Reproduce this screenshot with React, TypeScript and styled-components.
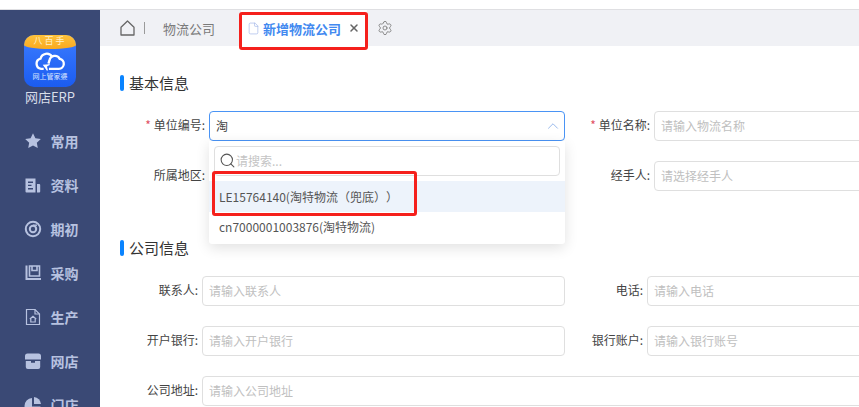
import styled, { createGlobalStyle } from 'styled-components';
import { ChevronUp, File, Search, Settings, X } from 'lucide-react';

const GlobalStyle = createGlobalStyle`
  html, body {
    margin: 0;
    padding: 0;
    height: 100%;
    overflow: hidden;
    background: #fff;
    font-family: "Noto Sans CJK SC", "Noto Sans", sans-serif;
    text-spacing-trim: space-all;
  }
  * { box-sizing: border-box; }
`;

const Page = styled.div`
  display: flex;
  flex-direction: column;
  width: 859px;
  height: 407px;
  overflow: hidden;
`;

const TopStrip = styled.div`
  height: 10px;
  flex: none;
  background: #fff;
  border-bottom: 1px solid #dfdfe2;
`;

const Body = styled.div`
  display: flex;
  flex: 1;
  min-height: 0;
`;

const Sidebar = styled.nav`
  width: 100px;
  flex: none;
  display: flex;
  flex-direction: column;
  align-items: center;
  background: #3a4975;
  padding-top: 25px;
  overflow: hidden;
`;

const Logo = styled.div`
  width: 52px;
  height: 52px;
  flex: none;
  border-radius: 10px;
  overflow: hidden;
  display: flex;
  flex-direction: column;
  align-items: center;
  background: linear-gradient(#3c7cff, #1b5cf0);
`;

const LogoBand = styled.div`
  width: 100%;
  height: 14px;
  flex: none;
  margin-bottom: 2px;
  background: linear-gradient(#fdc23c, #f9a91f);
  border-radius: 0 0 50% 50% / 0 0 4px 4px;
  color: #fff0c8;
  font-size: 9px;
  line-height: 12px;
  letter-spacing: 2px;
  text-align: center;
`;

const LogoText = styled.div`
  color: #dbe6ff;
  font-size: 7px;
  line-height: 9px;
  white-space: nowrap;
`;

const Brand = styled.div`
  margin-top: 1px;
  color: #d8dde9;
  font-size: 13px;
  line-height: 18px;
`;

const NavList = styled.div`
  display: flex;
  flex-direction: column;
  gap: 24px;
  margin-top: 25px;
  padding-left: 2px;
`;

const NavItem = styled.div`
  display: flex;
  align-items: center;
  gap: 9px;
  height: 20px;
  color: #b7c2e0;
  font-size: 14px;
  font-weight: 700;
  line-height: 20px;
`;

const Main = styled.main`
  flex: 1;
  min-width: 0;
  display: flex;
  flex-direction: column;
`;

const TabBar = styled.div`
  height: 36px;
  flex: none;
  display: flex;
  align-items: center;
  padding-left: 20px;
  background: #f0f1f5;
  color: #7a7a7a;
  font-size: 13px;
`;

const Divider = styled.span`
  width: 1px;
  height: 12px;
  margin: 0 18px 0 9px;
  background: #9a9a9a;
`;

const ActiveTab = styled.div`
  position: relative;
  display: flex;
  align-items: center;
  align-self: stretch;
  width: 126px;
  margin-left: 26px;
  padding-left: 6px;
  background: #fff;
  color: #4289f0;
  font-weight: 700;
`;

const TabLabel = styled.span`
  margin-left: 3px;
  margin-right: 7px;
`;

const TabMark = styled.span`
  position: absolute;
  left: -2px;
  top: 2px;
  width: 129px;
  height: 38px;
  border: 3px solid #f5201c;
  border-radius: 3px;
`;

const Gear = styled.span`
  display: flex;
  margin-left: 10px;
  color: #7d7d7d;
`;

const Content = styled.div`
  flex: 1;
  padding: 27px 0 0 20px;
  overflow: hidden;
`;

const SectionTitle = styled.h2<{ $gap?: number }>`
  display: flex;
  align-items: center;
  gap: 5px;
  height: 20px;
  margin: ${(p) => p.$gap ?? 0}px 0 18px;
  color: #333;
  font-size: 15px;
  font-weight: 400;
  line-height: 20px;

  &::before {
    content: '';
    width: 4px;
    height: 16px;
    border-radius: 2px;
    background: #0a84ff;
  }
`;

const FormGrid = styled.div<{ $columns: string }>`
  display: grid;
  grid-template-columns: ${(p) => p.$columns};
  column-gap: 4px;
  row-gap: 20px;
  align-items: center;
`;

const Label = styled.label<{ $required?: boolean }>`
  align-self: start;
  color: #444;
  font-size: 12px;
  line-height: 28px;
  text-align: right;
  white-space: nowrap;

  &::before {
    content: ${(p) => (p.$required ? "'* '" : 'none')};
    color: #e0505f;
  }
`;

const FieldBox = styled.div`
  position: relative;
`;

const TextInput = styled.input<{ $focused?: boolean }>`
  display: block;
  width: 100%;
  height: 30px;
  padding: 0 6px 2px;
  border: 1px solid ${(p) => (p.$focused ? '#4a94f5' : '#dfdfdf')};
  border-radius: 4px;
  outline: none;
  background: #fff;
  color: #444;
  font: inherit;
  font-size: 12px;

  &::placeholder {
    color: #c0c0c0;
  }
`;

const WideField = styled.div`
  grid-column: 2 / -1;
  width: 700px;
`;

const Caret = styled.span`
  position: absolute;
  right: 3px;
  top: 6px;
  display: flex;
  color: #8fb2ea;
`;

const Dropdown = styled.div`
  position: absolute;
  top: 100%;
  left: 0;
  right: 0;
  z-index: 5;
  height: 103px;
  padding-top: 5px;
  border-radius: 0 0 3px 3px;
  background: #fff;
  box-shadow: 0 4px 14px rgba(0, 0, 0, 0.12);
`;

const SearchBox = styled.div`
  display: flex;
  align-items: center;
  height: 30px;
  margin: 0 5px 5px;
  padding: 0 4px 2px;
  border: 1px solid #dfdfdf;
  border-radius: 4px;
  color: #c4c4c4;
  font-size: 12px;
`;

const SearchGlyph = styled.span`
  display: flex;
  color: #555;
`;

const Option = styled.div<{ $active?: boolean }>`
  height: ${(p) => (p.$active ? 31 : 30)}px;
  padding-left: 10px;
  background: ${(p) => (p.$active ? '#edf3fb' : '#fff')};
  color: #555;
  font-size: 12px;
  line-height: ${(p) => (p.$active ? 31 : 29)}px;
  white-space: nowrap;
`;

const OptionMark = styled.span`
  position: absolute;
  left: 3px;
  top: 30px;
  width: 205px;
  height: 45px;
  border: 3px solid #f5201c;
  border-radius: 3px;
`;

const StarIcon = () => (
  <svg width="18" height="18" viewBox="0 0 18 18" fill="currentColor">
    <path d="M9 1.2l2.4 5 5.4.7-4 3.8 1 5.4L9 13.5l-4.8 2.6 1-5.4-4-3.8 5.4-.7z" />
  </svg>
);

const DocsIcon = () => (
  <svg width="18" height="18" viewBox="0 0 18 18" fill="currentColor">
    <path
      fillRule="evenodd"
      d="M1.5 2.5h10v14h-9a1 1 0 0 1-1-1zM4 5.5v1.400h5V5.5zM4 8.700v1.400h3.500V8.700zM4 12v1.400h5V12z"
    />
    <path d="M13 8h2.200a1 1 0 0 1 1 1v6.500a1 1 0 0 1-1 1H13z" />
  </svg>
);

const TargetIcon = () => (
  <svg width="18" height="18" viewBox="0 0 18 18" fill="none" stroke="currentColor">
    <circle cx="9" cy="9" r="7.200" strokeWidth="2" />
    <circle cx="9" cy="9" r="3.200" strokeWidth="2" />
    <path d="M9 5.200h4" strokeWidth="1.400" />
  </svg>
);

const PurchaseIcon = () => (
  <svg width="18" height="18" viewBox="0 0 18 18" fill="none" stroke="currentColor" strokeWidth="1.600">
    <path d="M2.500 1.500v13.200M1.500 15h15.500" strokeWidth="2" />
    <path d="M5.500 2h10v10h-10z" />
    <path d="M8 2v4.500h5V2" />
  </svg>
);

const ProductionIcon = () => (
  <svg width="18" height="18" viewBox="0 0 18 18" fill="none" stroke="currentColor" strokeWidth="1.200">
    <path d="M2.500 1.500h8.500l4.500 4.500v10.500h-13z" />
    <path d="M11 1.500v4.500h4.500" />
    <path d="M5.800 11l3.200-2.700 3.200 2.700M6.800 10.300v3.700h4.400v-3.700" />
  </svg>
);

const ShopIcon = () => (
  <svg width="18" height="18" viewBox="0 0 18 18" fill="currentColor">
    <path d="M3.500 1.500h11a2.500 2.500 0 0 1 2.500 2.500v3.500H1V4a2.500 2.500 0 0 1 2.500-2.500z" />
    <path d="M1.800 9h5.200v1.800h4V9h5.200v6a2 2 0 0 1-2 2H3.800a2 2 0 0 1-2-2z" />
  </svg>
);

const PieIcon = () => (
  <svg width="18" height="18" viewBox="0 0 18 18" fill="currentColor">
    <path d="M8 2v8.500h8.500A8 8 0 1 1 8 2z" />
    <path d="M10 1a7.500 7.500 0 0 1 7 7h-7z" />
  </svg>
);

const HomeIcon = () => (
  <svg width="15" height="16" viewBox="0 0 15 16" fill="none" stroke="#666" strokeWidth="1.300">
    <path d="M1 7.200L7.500 1 14 7.200V15H1z" strokeLinejoin="round" />
  </svg>
);

const CloudIcon = () => (
  <svg width="32" height="21" viewBox="0 0 30 20" fill="none" stroke="#fff" strokeWidth="2.200">
    <path d="M9 17H6.500a5 5 0 0 1-.5-9.800A6 6 0 0 1 17 5.500" />
    <path d="M14 17h9.500a4.800 4.800 0 0 0 .8-9.500 5.200 5.200 0 0 0-9.800 1.500l-1 3" />
    <path d="M9 13.500l3.500 5-1-4 3-1.500z" fill="#fff" strokeWidth="1" />
  </svg>
);

const navItems = [
  { label: '常用', icon: <StarIcon /> },
  { label: '资料', icon: <DocsIcon /> },
  { label: '期初', icon: <TargetIcon /> },
  { label: '采购', icon: <PurchaseIcon /> },
  { label: '生产', icon: <ProductionIcon /> },
  { label: '网店', icon: <ShopIcon /> },
  { label: '门店', icon: <PieIcon /> },
];

export default function App() {
  return (
    <Page>
      <GlobalStyle />
      <TopStrip />
      <Body>
        <Sidebar>
          <Logo>
            <LogoBand>八百手</LogoBand>
            <CloudIcon />
            <LogoText>网上管家婆</LogoText>
          </Logo>
          <Brand>网店ERP</Brand>
          <NavList>
            {navItems.map((item) => (
              <NavItem key={item.label}>
                {item.icon}
                {item.label}
              </NavItem>
            ))}
          </NavList>
        </Sidebar>
        <Main>
          <TabBar>
            <HomeIcon />
            <Divider />
            物流公司
            <ActiveTab>
              <File size={13} strokeWidth={1.2} color="#9db4e8" />
              <TabLabel>新增物流公司</TabLabel>
              <X size={12} strokeWidth={3} color="#666" />
              <TabMark />
            </ActiveTab>
            <Gear>
              <Settings size={16} strokeWidth={1.3} />
            </Gear>
          </TabBar>
          <Content>
            <SectionTitle>基本信息</SectionTitle>
            <FormGrid $columns="85px 356px 81px 300px">
              <Label $required>单位编号:</Label>
              <FieldBox>
                <TextInput $focused readOnly value="淘" />
                <Caret>
                  <ChevronUp size={18} strokeWidth={1.2} />
                </Caret>
                <Dropdown>
                  <SearchBox>
                    <SearchGlyph>
                      <Search size={17} strokeWidth={1.5} />
                    </SearchGlyph>
                    请搜索...
                  </SearchBox>
                  <Option $active>LE15764140(淘特物流（兜底））</Option>
                  <Option>cn7000001003876(淘特物流)</Option>
                  <OptionMark />
                </Dropdown>
              </FieldBox>
              <Label $required>单位名称:</Label>
              <TextInput readOnly placeholder="请输入物流名称" />
              <Label>所属地区:</Label>
              <TextInput readOnly />
              <Label>经手人:</Label>
              <TextInput readOnly placeholder="请选择经手人" />
            </FormGrid>
            <SectionTitle $gap={47}>公司信息</SectionTitle>
            <FormGrid $columns="78px 363px 74px 300px">
              <Label>联系人:</Label>
              <TextInput readOnly placeholder="请输入联系人" />
              <Label>电话:</Label>
              <TextInput readOnly placeholder="请输入电话" />
              <Label>开户银行:</Label>
              <TextInput readOnly placeholder="请输入开户银行" />
              <Label>银行账户:</Label>
              <TextInput readOnly placeholder="请输入银行账号" />
              <Label>公司地址:</Label>
              <WideField>
                <TextInput readOnly placeholder="请输入公司地址" />
              </WideField>
            </FormGrid>
          </Content>
        </Main>
      </Body>
    </Page>
  );
}
